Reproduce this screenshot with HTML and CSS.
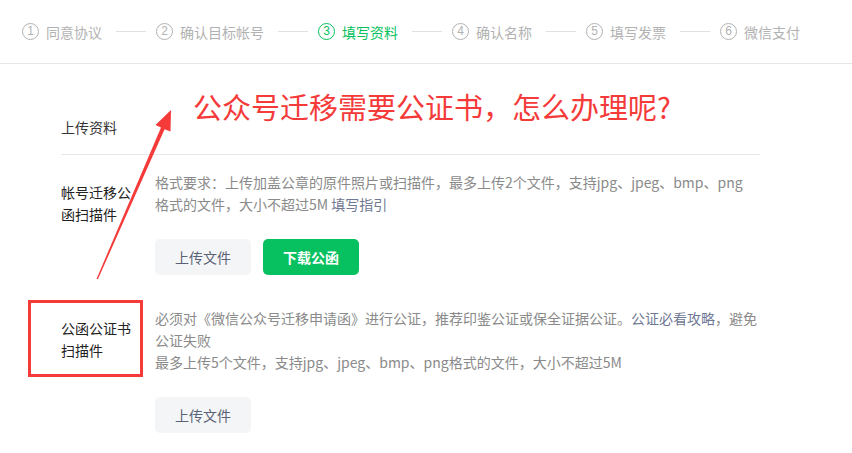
FILE: index.html
```html
<!DOCTYPE html>
<html lang="zh-CN">

<head>
    <meta charset="UTF-8">
    <meta name="viewport" content="width=device-width, initial-scale=1.0">
    <title>填写资料</title>
    <link rel="stylesheet" href="styles.css">
</head>

<body>
    <div class="steps">
        <div class="step"><span class="step-num">1</span><span class="step-name">同意协议</span></div>
        <span class="step-line"></span>
        <div class="step"><span class="step-num">2</span><span class="step-name">确认目标帐号</span></div>
        <span class="step-line"></span>
        <div class="step active"><span class="step-num">3</span><span class="step-name">填写资料</span></div>
        <span class="step-line"></span>
        <div class="step"><span class="step-num">4</span><span class="step-name">确认名称</span></div>
        <span class="step-line"></span>
        <div class="step"><span class="step-num">5</span><span class="step-name">填写发票</span></div>
        <span class="step-line"></span>
        <div class="step"><span class="step-num">6</span><span class="step-name">微信支付</span></div>
    </div>

    <div class="main">
        <h2 class="section-title">上传资料</h2>

        <div class="form-row">
            <div class="form-label">帐号迁移公函扫描件</div>
            <div class="form-body">
                <p class="tips">格式要求：上传加盖公章的原件照片或扫描件，最多上传2个文件，支持jpg、jpeg、bmp、png<br>格式的文件，大小不超过5M <a href="#">填写指引</a></p>
                <div class="btn-group">
                    <button type="button" class="btn btn-default">上传文件</button>
                    <button type="button" class="btn btn-primary">下载公函</button>
                </div>
            </div>
        </div>

        <div class="form-row">
            <div class="form-label">公函公证书扫描件</div>
            <div class="form-body">
                <p class="tips">必须对《微信公众号迁移申请函》进行公证，推荐印鉴公证或保全证据公证。<a href="#">公证必看攻略</a>，避免<br>公证失败</p>
                <p class="tips">最多上传5个文件，支持jpg、jpeg、bmp、png格式的文件，大小不超过5M</p>
                <div class="btn-group">
                    <button type="button" class="btn btn-default">上传文件</button>
                </div>
            </div>
        </div>
    </div>

    <!-- annotation layer -->
    <div class="note-title">公众号迁移需要公证书，怎么办理呢?</div>
    <div class="note-box"></div>
    <svg class="note-arrow" width="852" height="453" viewBox="0 0 852 453">
        <polygon points="96.5,279 161,127.5 155.5,125 171,110 170.5,131.5 164.6,129.3 98,279" fill="#f53a3a" />
    </svg>
</body>

</html>
```

FILE: styles.css
```css
body {
    margin: 0;
    font-family: "Noto Sans CJK SC", sans-serif;
    font-size: 14px;
    color: #353535;
    background-color: #fff;
}

.steps {
    display: flex;
    align-items: center;
    height: 63px;
    padding-left: 22px;
    border-bottom: 1px solid #e7e7e7;
}

.step {
    display: flex;
    align-items: center;
    color: #b2b2b2;
}

.step-num {
    box-sizing: border-box;
    width: 17px;
    height: 17px;
    margin-right: 7px;
    border: 1px solid #b2b2b2;
    border-radius: 50%;
    font-family: "Liberation Sans", sans-serif;
    font-size: 12px;
    line-height: 15px;
    text-align: center;
}

.step-name {
    line-height: 22px;
}

.step.active {
    color: #07c160;
}

.step.active .step-num {
    border-color: #07c160;
}

.step-line {
    width: 30px;
    height: 1px;
    margin: 0 10px 0 14px;
    background-color: #e0e0e0;
}

.main {
    width: 699px;
    margin-left: 61px;
    padding-top: 52px;
}

.section-title {
    margin: 0;
    padding-bottom: 16px;
    border-bottom: 1px solid #e7e7e7;
    font-size: 14px;
    font-weight: normal;
    line-height: 22px;
    color: #353535;
}

.form-row {
    display: flex;
    padding-top: 16px;
}

.form-row + .form-row {
    padding-top: 32px;
}

.form-label {
    width: 74px;
    margin-right: 20px;
    padding-top: 10px;
    line-height: 22px;
    color: #222;
}

.form-body {
    width: 605px;
}

.tips {
    margin: 0;
    line-height: 22px;
    color: #8a8a8a;
}

.tips a {
    text-decoration: none;
    color: #6f7993;
}

.btn-group {
    display: flex;
    gap: 12px;
    margin-top: 24px;
}

.btn {
    width: 96px;
    height: 36px;
    border: none;
    border-radius: 5px;
    font-family: inherit;
    font-size: 14px;
    cursor: pointer;
}

.btn-default {
    background-color: #f4f5f7;
    color: #5a6275;
}

.btn-primary {
    background-color: #07c160;
    color: #fff;
    font-weight: bold;
}

.note-title {
    position: absolute;
    left: 193px;
    top: 89px;
    font-size: 29px;
    line-height: 34px;
    color: #f53a3a;
    white-space: nowrap;
}

.note-box {
    position: absolute;
    left: 28px;
    top: 300px;
    width: 109px;
    height: 71px;
    border: 3px solid #f53a3a;
}

.note-arrow {
    position: absolute;
    left: 0;
    top: 0;
    pointer-events: none;
}
```
